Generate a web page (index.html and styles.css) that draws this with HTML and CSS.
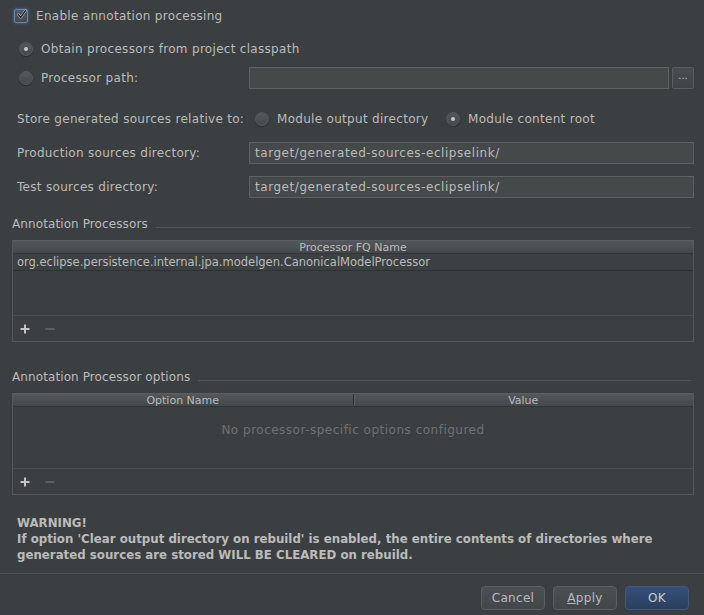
FILE: index.html
```html
<!DOCTYPE html>
<html lang="en">
<head>
  <meta charset="UTF-8">
  <title>Annotation Processors</title>
  <link rel="stylesheet" href="styles.css">
</head>
<body>
  <div class="dialog">
    <div class="splitter"></div>

    <div class="content">
      <div class="check-row">
        <span class="checkbox">
          <svg width="14" height="14" viewBox="0 0 14 14">
            <path d="M3 6.5 L6 10 L12 1.5" fill="none" stroke="#d0d4d8" stroke-width="3" stroke-linecap="round" stroke-linejoin="round"/>
            <path d="M3 6.5 L6 10 L12 1.5" fill="none" stroke="#1b1d20" stroke-width="1.8" stroke-linecap="round" stroke-linejoin="round"/>
          </svg>
        </span>
        Enable annotation processing
      </div>

      <div class="radio-row first">
        <span class="radio on"></span>
        Obtain processors from project classpath
      </div>

      <div class="path-row">
        <div class="radio-row inline">
          <span class="radio"></span>
          Processor path:
        </div>
        <div class="field"></div>
        <div class="browse">...</div>
      </div>

      <div class="store-row">
        <span class="store-label">Store generated sources relative to:</span>
        <span class="radio"></span>
        <span class="store-opt">Module output directory</span>
        <span class="radio on"></span>
        <span>Module content root</span>
      </div>

      <div class="form-row prod">
        <span class="form-label">Production sources directory:</span>
        <div class="field">target/generated-sources-eclipselink/</div>
      </div>

      <div class="form-row test">
        <span class="form-label">Test sources directory:</span>
        <div class="field">target/generated-sources-eclipselink/</div>
      </div>

      <div class="group-title first-group">
        <span>Annotation Processors</span>
        <span class="group-line"></span>
      </div>

      <div class="table">
        <div class="thead">
          <div class="th">Processor FQ Name</div>
        </div>
        <div class="trow">org.eclipse.persistence.internal.jpa.modelgen.CanonicalModelProcessor</div>
        <div class="tempty short"></div>
        <div class="toolbar">
          <svg class="tool" width="12" height="12" viewBox="0 0 12 12"><path d="M6 1.5 V10.5 M1.5 6 H10.5" stroke="#c4c4c4" stroke-width="2"/></svg>
          <svg class="tool" width="12" height="12" viewBox="0 0 12 12"><path d="M1.5 6 H10.5" stroke="#5d6062" stroke-width="2"/></svg>
        </div>
      </div>

      <div class="group-title second-group">
        <span>Annotation Processor options</span>
        <span class="group-line"></span>
      </div>

      <div class="table">
        <div class="thead">
          <div class="th">Option Name</div>
          <div class="th divided">Value</div>
        </div>
        <div class="tempty tall">No processor-specific options configured</div>
        <div class="toolbar">
          <svg class="tool" width="12" height="12" viewBox="0 0 12 12"><path d="M6 1.5 V10.5 M1.5 6 H10.5" stroke="#c4c4c4" stroke-width="2"/></svg>
          <svg class="tool" width="12" height="12" viewBox="0 0 12 12"><path d="M1.5 6 H10.5" stroke="#5d6062" stroke-width="2"/></svg>
        </div>
      </div>

      <div class="warning">
        WARNING!<br>
        If option 'Clear output directory on rebuild' is enabled, the entire contents of directories where<br>
        generated sources are stored WILL BE CLEARED on rebuild.
      </div>
    </div>

    <div class="footer">
      <button class="btn">Cancel</button>
      <button class="btn"><u>A</u>pply</button>
      <button class="btn default">OK</button>
    </div>
  </div>
</body>
</html>
```

FILE: styles.css
```css
body {
  margin: 0;
  background-color: #3c3f41;
  font-family: "DejaVu Sans", sans-serif;
  font-size: 12px;
  letter-spacing: 0.3px;
  color: #bbbbbb;
}

.dialog {
  position: relative;
  width: 704px;
  height: 615px;
  overflow: hidden;
  display: flex;
  flex-direction: column;
}

.splitter {
  position: absolute;
  left: 1px;
  top: 278px;
  width: 4px;
  height: 16px;
  background-image: radial-gradient(circle, #7d8082 0.5px, transparent 0.7px);
  background-size: 2px 2px;
}

.content {
  padding: 0 10px 0 12px;
  flex: 1;
}

/* checkbox + radios */
.check-row {
  display: flex;
  align-items: center;
  height: 16px;
  margin-top: 8px;
  padding-left: 2px;
  gap: 8px;
}

.checkbox {
  width: 14px;
  height: 14px;
  box-sizing: border-box;
  border: 1px solid #5d84b4;
  border-radius: 2px;
  background: linear-gradient(#545a5f, #464a4e);
  box-shadow: 0 0 2px 1px rgba(70, 110, 160, 0.6);
  display: flex;
  align-items: center;
  justify-content: center;
}

.checkbox svg {
  margin-top: -2px;
  margin-left: 1px;
}

.radio-row {
  display: flex;
  align-items: center;
  height: 20px;
  padding-left: 7px;
  gap: 8px;
}

.radio-row.first {
  margin-top: 15px;
}

.radio-row.inline {
  width: 230px;
  flex: none;
}

.radio {
  width: 14px;
  height: 14px;
  box-sizing: border-box;
  border-radius: 50%;
  border: 1px solid #555859;
  background: linear-gradient(#55585b, #46494b);
  box-shadow: 0 1px 1px rgba(0, 0, 0, 0.3);
  flex: none;
  display: inline-flex;
  align-items: center;
  justify-content: center;
}

.radio.on::after {
  content: "";
  width: 4px;
  height: 4px;
  border-radius: 50%;
  background: #c8c8c8;
}

.path-row {
  display: flex;
  align-items: center;
  height: 22px;
  margin-top: 8px;
}

.field {
  height: 22px;
  box-sizing: border-box;
  border: 1px solid #5e6062;
  background: #45494a;
  padding-left: 5px;
  line-height: 20px;
  letter-spacing: 0.55px;
  flex: 1;
}

.browse {
  width: 22px;
  height: 22px;
  box-sizing: border-box;
  margin-left: 3px;
  border: 1px solid #5a5d5f;
  border-radius: 2px;
  background: linear-gradient(#4a4e50, #414446);
  text-align: center;
  font-size: 10px;
  letter-spacing: 0;
  line-height: 16px;
}

.store-row {
  display: flex;
  align-items: center;
  height: 20px;
  margin-top: 20px;
  padding-left: 5px;
}

.store-label {
  width: 238px;
}

.store-row .radio {
  margin-right: 8px;
}

.store-opt {
  width: 169px;
}

.form-row {
  display: flex;
  align-items: center;
  height: 22px;
  padding-left: 5px;
}

.form-row.prod {
  margin-top: 13px;
}

.form-row.test {
  margin-top: 12px;
}

.form-label {
  width: 232px;
  flex: none;
}

/* titled groups */
.group-title {
  display: flex;
  height: 16px;
  line-height: 16px;
  margin-right: 3px;
  letter-spacing: 0.1px;
}

.group-title.first-group {
  margin-top: 18px;
}

.group-title.second-group {
  margin-top: 27px;
}

.group-line {
  flex: 1;
  height: 1px;
  margin: 11px 0 0 8px;
  background: #535658;
}

/* tables */
.table {
  margin-top: 8px;
  border: 1px solid #545759;
  border-top: none;
}

.thead {
  display: flex;
  height: 12px;
  background: linear-gradient(#54585a, #44474a);
  border-top: 1px solid #5c5f61;
  border-bottom: 1px solid #323436;
}

.th {
  flex: 1;
  text-align: center;
  font-size: 11px;
  letter-spacing: 0;
  line-height: 13px;
}

.th.divided {
  border-left: 1px solid #2f3133;
  box-shadow: inset 1px 0 0 #5a5d5f;
}

.trow {
  height: 16px;
  line-height: 16px;
  padding-left: 4px;
  font-size: 11.5px;
  letter-spacing: 0;
  border-bottom: 1px solid #2e3032;
  background: #3d4042;
}

.tempty.short {
  height: 44px;
}

.tempty.tall {
  height: 45px;
  padding-top: 16px;
  text-align: center;
  line-height: 15px;
  letter-spacing: 0.5px;
  color: #6e7173;
}

.toolbar {
  display: flex;
  align-items: center;
  height: 25px;
  border-top: 1px solid #4a4d4f;
  padding-left: 6px;
  gap: 13px;
}

/* warning + footer */
.warning {
  margin-top: 20px;
  padding-left: 5px;
  font-weight: bold;
  font-size: 11.8px;
  letter-spacing: 0;
  line-height: 16px;
}

.footer {
  height: 42px;
  box-sizing: border-box;
  border-top: 1px solid #505355;
  display: flex;
  justify-content: flex-end;
  align-items: flex-start;
  padding: 12px 15px 0 0;
  gap: 8px;
}

.btn {
  width: 64px;
  height: 24px;
  border: 1px solid #5a5d5f;
  border-radius: 4px;
  background: linear-gradient(#4c5052, #43464a);
  color: #bbbbbb;
  font-family: "DejaVu Sans", sans-serif;
  font-size: 12px;
  letter-spacing: 0.3px;
  padding: 0;
}

.btn.default {
  border-color: #43587a;
  background: linear-gradient(#37507a, #2b3f5e);
  color: #c8ccd2;
}
```
